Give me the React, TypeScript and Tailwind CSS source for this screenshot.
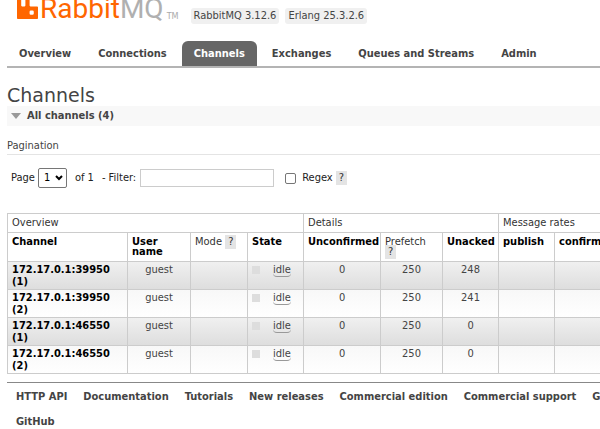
import React from "react";

const tabs = ["Overview", "Connections", "Channels", "Exchanges", "Queues and Streams", "Admin"];

const channels = [
  { name: "172.17.0.1:39950", index: 1, unacked: 248 },
  { name: "172.17.0.1:39950", index: 2, unacked: 241 },
  { name: "172.17.0.1:46550", index: 1, unacked: 0 },
  { name: "172.17.0.1:46550", index: 2, unacked: 0 },
];

const links = [
  "HTTP API",
  "Documentation",
  "Tutorials",
  "New releases",
  "Commercial edition",
  "Commercial support",
  "Google Group",
  "GitHub",
];

function Help() {
  return (
    <button type="button" className="-my-[2px] bg-[#e4e4e4] px-[3px] leading-[14px] text-[#333]">
      ?
    </button>
  );
}

function Header() {
  return (
    <header className="flex h-[41px] items-start pl-[17px]">
      <svg viewBox="0 0 24 24" className="-mt-[2px] h-[21px] w-[21px]" aria-hidden="true">
        <path
          fill="#ff6600"
          d="M23.035 9.601h-7.677a.956.956 0 01-.962-.962V.962a.956.956 0 00-.962-.956H10.56a.956.956 0 00-.962.956V8.64a.956.956 0 01-.962.962H5.762a.956.956 0 01-.961-.962V.962A.956.956 0 003.839 0H.959a.956.956 0 00-.956.962v22.076A.956.956 0 00.965 24h22.07a.956.956 0 00.962-.962V10.58a.956.956 0 00-.962-.98zm-3.86 8.152a1.437 1.437 0 01-1.437 1.443h-1.924a1.437 1.437 0 01-1.436-1.443v-1.917a1.437 1.437 0 011.436-1.443h1.924a1.437 1.437 0 011.437 1.443z"
        />
      </svg>
      <span className="-mt-[7px] ml-[2px] font-['Roboto',sans-serif] text-[28px] leading-8 text-[#ff6600]">
        Rabbit<span className="text-[#b0b0b0]">MQ</span>
      </span>
      <span className="mt-[10px] ml-[3px] text-[9px] leading-3 text-[#aaa]">TM</span>
      <ul className="mt-2 ml-3 flex gap-[6px]">
        <li className="rounded-[3px] bg-[#f0f0f0] px-[3px] leading-4">RabbitMQ 3.12.6</li>
        <li className="rounded-[3px] bg-[#f0f0f0] px-[3px] leading-4">Erlang 25.3.2.6</li>
      </ul>
    </header>
  );
}

const cell = "border border-[#ccc] px-1";
const head = cell + " pt-1 text-left align-top leading-[10px]";

export default function App() {
  return (
    <div className="overflow-hidden bg-white font-['DejaVu_Sans_Condensed','DejaVu_Sans',sans-serif] text-[11px] text-[#444]">
      <Header />
      <nav className="ml-[7px] border-b-2 border-[#b4b4b4]">
        <ul className="flex gap-[3px] font-bold">
          {tabs.map((tab) => (
            <li key={tab}>
              <a
                href="#"
                className={
                  tab === "Channels"
                    ? "block rounded-t-md bg-[#666] px-3 leading-[25px] whitespace-nowrap text-white"
                    : "block px-3 leading-[25px] whitespace-nowrap"
                }
              >
                {tab}
              </a>
            </li>
          ))}
        </ul>
      </nav>

      <main className="ml-[7px] pt-4">
        <h1 className="font-['DejaVu_Sans',sans-serif] text-[19px] leading-[22px]">Channels</h1>
        <h2 className="flex h-5 items-center gap-[6px] bg-[#f8f8f8] pl-1 font-bold">
          <svg viewBox="0 0 10 6" className="h-[6px] w-[10px]" aria-hidden="true">
            <path d="M0 0h10L5 6z" fill="#999" />
          </svg>
          All channels (4)
        </h2>
        <h3 className="mt-3 border-b border-[#e4e4e4] leading-4">Pagination</h3>

        <form className="mt-[13px] flex h-5 items-center pl-1 text-[#222]">
          <label htmlFor="page">Page</label>
          <span className="relative ml-[3px] flex">
            <select
              id="page"
              className="h-5 w-[29px] appearance-none rounded-[2px] border border-[#767676] bg-white pl-[5px] text-black"
            >
              <option>1</option>
            </select>
            <svg viewBox="0 0 8 6" className="pointer-events-none absolute top-[7px] right-1 h-[6px] w-2" aria-hidden="true">
              <path d="M1 1l3 3 3-3" fill="none" stroke="#000" strokeWidth="2" />
            </svg>
          </span>
          <span className="ml-2">of 1</span>
          <label htmlFor="filter" className="ml-2">
            - Filter:
          </label>
          <input id="filter" type="text" className="ml-1 h-[18px] w-[134px] border border-[#ccc] bg-white" />
          <input
            id="regex"
            type="checkbox"
            className="ml-[11px] h-[11px] w-[11px] appearance-none rounded-[2px] border border-[#767676] bg-white"
          />
          <label htmlFor="regex" className="mr-[3px] ml-[6px]">
            Regex
          </label>
          <Help />
        </form>

        <table className="mt-[25px] w-[660px] table-fixed border-collapse">
          <colgroup>
            <col className="w-[120px]" />
            <col className="w-[63px]" />
            <col className="w-[57px]" />
            <col className="w-[56px]" />
            <col className="w-[77px]" />
            <col className="w-[62px]" />
            <col className="w-[56px]" />
            <col className="w-[56px]" />
            <col />
          </colgroup>
          <thead className="text-black">
            <tr className="h-[19px] text-left text-[#333]">
              <th colSpan={4} className={cell + " font-normal leading-4"}>Overview</th>
              <th colSpan={3} className={cell + " font-normal leading-4"}>Details</th>
              <th colSpan={2} className={cell + " font-normal leading-4"}>Message rates</th>
            </tr>
            <tr className="h-[29px]">
              <th className={head}>Channel</th>
              <th className={head}>User name</th>
              <th className={head + " font-normal text-[#333]"}>
                Mode <Help />
              </th>
              <th className={head}>State</th>
              <th className={head}>Unconfirmed</th>
              <th className={head + " font-normal text-[#333]"}>
                Prefetch <Help />
              </th>
              <th className={head}>Unacked</th>
              <th className={head}>publish</th>
              <th className={head}>confirm</th>
            </tr>
          </thead>
          <tbody>
            {channels.map((c, i) => (
              <tr
                key={i}
                className={
                  i % 2 === 0
                    ? "h-7 bg-linear-to-b from-[#f0f0f0] to-[#dddddd] text-center align-top leading-4"
                    : "h-7 bg-linear-to-b from-[#f8f8f8] to-white text-center align-top leading-4"
                }
              >
                <td className={cell + " pt-[2px] text-left leading-3 font-bold text-black"}>
                  <a href="#">
                    {c.name} ({c.index})
                  </a>
                </td>
                <td className={cell}>guest</td>
                <td className={cell} />
                <td className={cell}>
                  <div className="flex items-center">
                    <span className="h-2 w-2 bg-[#ddd]" />
                    <abbr className="mt-px ml-[13px] rounded-[4px] border-b border-[#999] leading-[13px]">idle</abbr>
                  </div>
                </td>
                <td className={cell}>0</td>
                <td className={cell}>250</td>
                <td className={cell}>{c.unacked}</td>
                <td className={cell} />
                <td className={cell} />
              </tr>
            ))}
          </tbody>
        </table>
      </main>

      <footer className="mt-2 ml-[7px] border-t border-[#888]">
        <ul className="flex w-[700px] flex-wrap gap-x-4 px-[9px] pt-[1px] font-bold">
          {links.map((link) => (
            <li key={link}>
              <a href="#" className="leading-[25px] whitespace-nowrap">
                {link}
              </a>
            </li>
          ))}
        </ul>
      </footer>
    </div>
  );
}
